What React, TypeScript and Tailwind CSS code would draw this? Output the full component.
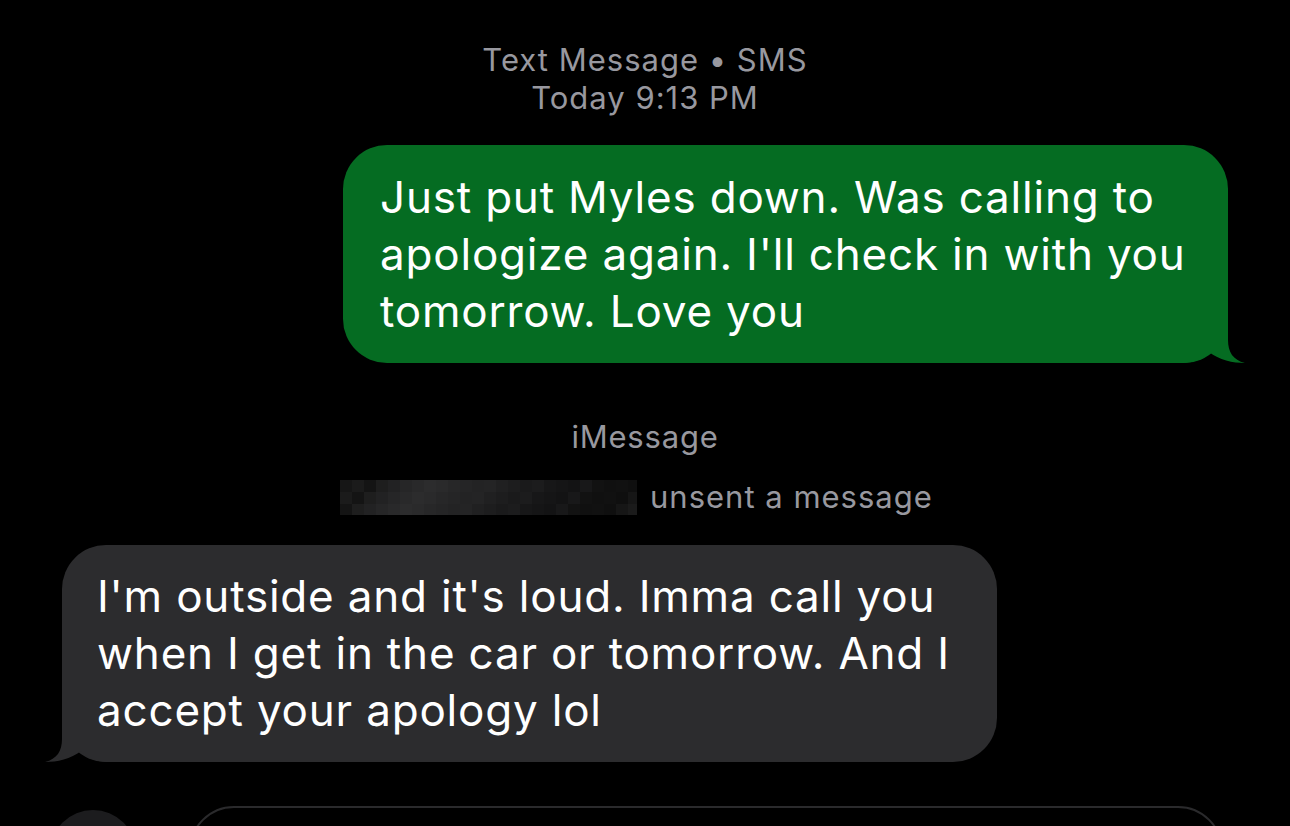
import React from 'react'

const font = { fontFamily: 'Inter, "Noto Sans", sans-serif' }

const pixelShades = [
  '#161616', '#1b1b1b', '#141414', '#1e1e1e', '#222223', '#262627', '#29292a', '#2c2c2d', '#2a2a2b', '#272728',
  '#252526', '#232324', '#242425', '#202021', '#1d1d1e', '#1a1a1b', '#1c1c1d', '#171718', '#151516', '#131314',
  '#181819', '#121212', '#101010', '#111111', '#0f0f0f',
]

const PixelName = () => (
  <div className="flex flex-col w-[297px] h-[35px] overflow-hidden">
    {[0, 1, 2].map((row) => (
      <div key={row} className="flex h-[12px]">
        {pixelShades.map((_, i) => (
          <div
            key={i}
            className="w-[12px] h-[12px] shrink-0"
            style={{ backgroundColor: pixelShades[(i + row) % pixelShades.length] }}
          />
        ))}
      </div>
    ))}
  </div>
)

const App = () => {
  return (
    <div className="w-[1290px] h-[826px] bg-black overflow-hidden relative" style={font}>
      <div className="flex flex-col items-center pt-[41px]">
        <p className="text-[31px] leading-[38px] tracking-[1px] text-[#98989f] text-center">
          Text Message • SMS
          <br />
          Today 9:13 PM
        </p>
      </div>

      {/* outgoing sms */}
      <div className="flex justify-end pr-[62px] mt-[28px]">
        <div className="relative bg-[#056c22] rounded-[44px] w-[885px] pl-[37px] pt-[24px] pb-[23px]">
          <svg className="absolute right-[-17px] bottom-0" width="62" height="44" viewBox="0 0 62 44">
            <path d="M0 0 L45 0 L45 21 C45 33 50 41 62 44 C50 44 36 41 26 33 C20 40 10 44 0 44 Z" fill="#056c22" />
          </svg>
          <p className="relative text-white text-[44px] leading-[57px] tracking-[0.8px]">
            Just put Myles down. Was calling to
            <br />
            apologize again. I'll check in with you
            <br />
            tomorrow. Love you
          </p>
        </div>
      </div>

      <div className="flex flex-col mt-[55px]">
        <p className="text-[31px] leading-[38px] tracking-[0.8px] text-[#98989f] text-center">iMessage</p>
        <div className="flex items-center gap-[13px] mt-[22px] pl-[340px]">
          <PixelName />
          <span className="text-[31px] leading-[38px] text-[#98989f] tracking-[1px]">unsent a message</span>
        </div>
      </div>

      {/* incoming */}
      <div className="flex justify-start pl-[62px] mt-[29px]">
        <div className="relative bg-[#2c2c2e] rounded-[44px] w-[935px] pl-[35px] pt-[23px] pb-[23px]">
          <svg className="absolute left-[-17px] bottom-0 -scale-x-100" width="62" height="44" viewBox="0 0 62 44">
            <path d="M0 0 L45 0 L45 21 C45 33 50 41 62 44 C50 44 36 41 26 33 C20 40 10 44 0 44 Z" fill="#2c2c2e" />
          </svg>
          <p className="relative text-white text-[44px] leading-[57px] tracking-[0.8px]">
            I'm outside and it's loud. Imma call you
            <br />
            when I get in the car or tomorrow. And I
            <br />
            accept your apology lol
          </p>
        </div>
      </div>

      {/* composer */}
      <div className="flex items-start gap-[53px] pl-[50px] mt-[44px]">
        <div className="w-[86px] h-[86px] rounded-full bg-[#1c1c1e] shrink-0 mt-[4px]" />
        <div className="w-[1034px] h-[90px] rounded-[45px] border-2 border-[#2a2a2c]" />
      </div>
    </div>
  )
}

export default App
